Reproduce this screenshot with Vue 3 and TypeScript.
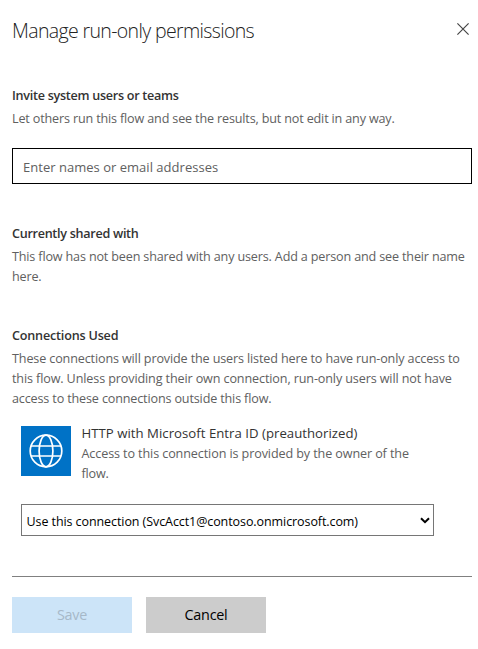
<script setup lang="ts">
import { ref } from 'vue'

interface TextLine {
  text: string
  spacing: string
}

const names = ref('')
const connection = ref('svc')

const sharedLines: TextLine[] = [
  { text: 'This flow has not been shared with any users. Add a person and see their name', spacing: '-0.16px' },
  { text: 'here.', spacing: '-0.16px' },
]
const usedLines: TextLine[] = [
  { text: 'These connections will provide the users listed here to have run-only access to', spacing: '-0.14px' },
  { text: 'this flow. Unless providing their own connection, run-only users will not have', spacing: '-0.125px' },
  { text: 'access to these connections outside this flow.', spacing: '-0.155px' },
]
const accessLines: TextLine[] = [
  { text: 'Access to this connection is provided by the owner of the', spacing: '-0.11px' },
  { text: 'flow.', spacing: '-0.16px' },
]
</script>

<template>
  <main class="panel">
    <header class="header">
      <h1 class="title">Manage run-only permissions</h1>
      <button class="close" aria-label="Close">
        <svg width="12" height="12" viewBox="0 0 12 12"><path d="M.4.4 11.6 11.6M11.6.4.4 11.6" stroke="#444" stroke-width="1.15" fill="none" /></svg>
      </button>
    </header>

    <section class="invite">
      <h2 class="heading h-invite">Invite system users or teams</h2>
      <p class="body"><span class="line">Let others run this flow and see the results, but not edit in any way.</span></p>
      <input v-model="names" class="people" placeholder="Enter names or email addresses" />
    </section>

    <section class="shared">
      <h2 class="heading h-shared">Currently shared with</h2>
      <p class="body">
        <span v-for="l in sharedLines" :key="l.text" class="line" :style="{ letterSpacing: l.spacing }">{{ l.text }}</span>
      </p>
    </section>

    <section class="used">
      <h2 class="heading h-used">Connections Used</h2>
      <p class="body">
        <span v-for="l in usedLines" :key="l.text" class="line" :style="{ letterSpacing: l.spacing }">{{ l.text }}</span>
      </p>
      <div class="connection">
        <div class="tile">
          <svg width="34" height="34" viewBox="0 0 34 34" fill="none" stroke="#fff" stroke-width="1.7">
            <circle cx="17" cy="17" r="15.8" />
            <ellipse cx="17" cy="17" rx="6.9" ry="15.8" />
            <path d="M2 12h30M2 22h30" />
          </svg>
        </div>
        <div class="details">
          <div class="name">HTTP with Microsoft Entra ID (preauthorized)</div>
          <p class="body">
            <span v-for="l in accessLines" :key="l.text" class="line" :style="{ letterSpacing: l.spacing }">{{ l.text }}</span>
          </p>
        </div>
      </div>
      <div class="select-wrap">
        <select v-model="connection" class="select">
          <option value="svc">Use this connection (SvcAcct1@contoso.onmicrosoft.com)</option>
        </select>
        <svg class="chevron" width="10" height="7" viewBox="0 0 10 7"><path d="M1 1.2 5 5.2 9 1.2" fill="none" stroke="#000" stroke-width="2" /></svg>
      </div>
    </section>

    <footer class="footer">
      <button class="btn save" disabled>Save</button>
      <button class="btn cancel">Cancel</button>
    </footer>
  </main>
</template>

<style>
body {
  background: #fff;
}
</style>

<style scoped>
.panel {
  box-sizing: border-box;
  width: 478px;
  height: 649px;
  padding: 16px 6px 0 12px;
  overflow: hidden;
  font-family: "Open Sans", "Noto Sans", sans-serif;
  font-size: 12.6px;
  line-height: 20px;
  color: #333;
}
.header {
  display: flex;
  justify-content: space-between;
  height: 70px;
}
.title {
  margin: 0;
  font-size: 19.5px;
  font-weight: 300;
  line-height: 30px;
  letter-spacing: -0.64px;
  color: #222;
  white-space: nowrap;
}
.close {
  display: flex;
  width: 12px;
  height: 12px;
  margin: 7px 3px 0 0;
  padding: 0;
  border: 0;
  background: none;
}
.heading {
  margin: 0 0 3px;
  font-size: 12.6px;
  font-weight: 600;
  line-height: 20px;
  white-space: nowrap;
}
.h-invite {
  letter-spacing: -0.28px;
}
.h-shared {
  letter-spacing: -0.29px;
}
.h-used {
  letter-spacing: -0.19px;
}
.body {
  margin: 0;
  color: #606060;
  letter-spacing: -0.16px;
}
.line {
  display: block;
  width: max-content;
  white-space: nowrap;
}
.people {
  display: block;
  box-sizing: border-box;
  width: 460px;
  height: 36px;
  margin-top: 19px;
  padding: 2px 10px 0;
  border: 1px solid #000;
  border-radius: 0;
  background: #fff;
  font: 13px "Open Sans", "Noto Sans", sans-serif;
  letter-spacing: 0.02px;
  outline: none;
}
.people::placeholder {
  color: #606060;
  opacity: 1;
}
.shared {
  margin-top: 40px;
}
.used {
  margin-top: 39px;
}
.connection {
  display: flex;
  gap: 10.5px;
  margin: 14px 0 0 9px;
}
.tile {
  display: flex;
  align-items: center;
  justify-content: center;
  width: 50px;
  height: 50px;
  margin-top: 3px;
  background: #0072c6;
}
.name {
  margin-bottom: 1px;
  font-size: 13.2px;
  letter-spacing: 0.02px;
  white-space: nowrap;
}
.select-wrap {
  position: relative;
  width: 413px;
  margin: 20px 0 0 9px;
}
.select {
  display: block;
  box-sizing: border-box;
  width: 413px;
  height: 32px;
  padding: 2px 0 0 4.5px;
  border: 1px solid #767676;
  border-radius: 0;
  appearance: none;
  background: #fff;
  color: #000;
  font: 12.5px "Open Sans", "Noto Sans", sans-serif;
  letter-spacing: -0.08px;
}
.chevron {
  position: absolute;
  top: 13px;
  right: 4px;
}
.footer {
  display: flex;
  gap: 14px;
  width: 460px;
  margin-top: 40px;
  padding-top: 20px;
  border-top: 1px solid #808080;
}
.btn {
  width: 120px;
  height: 36px;
  padding: 0 0 1px;
  border: 0;
  font: 14.4px "Open Sans", "Noto Sans", sans-serif;
  letter-spacing: -0.25px;
}
.save {
  background: #cce4f8;
  color: #a6b8c8;
}
.cancel {
  background: #ccc;
  color: #000;
}
</style>
